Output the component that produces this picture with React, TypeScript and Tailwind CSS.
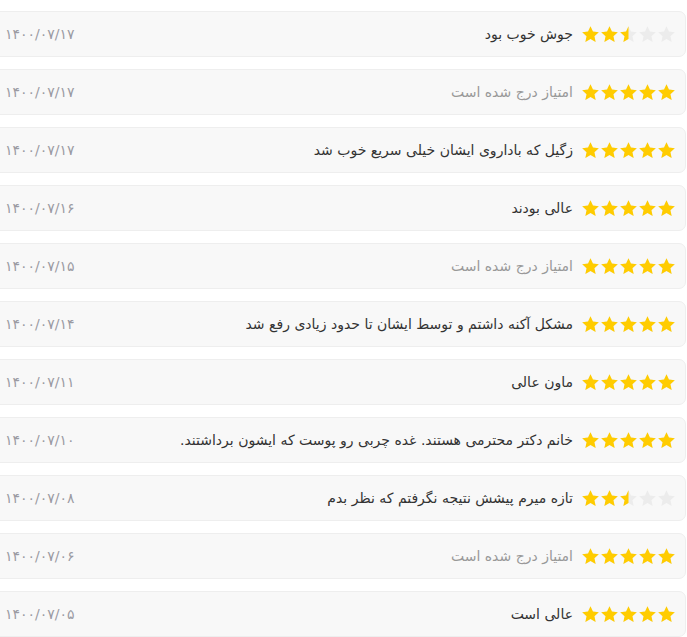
import React from "react";

type Row = { text: string; rating: number; date: string; muted?: boolean };

const rows: Row[] = [
  { text: "جوش خوب بود", rating: 2.5, date: "۱۴۰۰/۰۷/۱۷" },
  { text: "امتیاز درج شده است", rating: 5, date: "۱۴۰۰/۰۷/۱۷", muted: true },
  { text: "زگیل که باداروی ایشان خیلی سریع خوب شد", rating: 5, date: "۱۴۰۰/۰۷/۱۷" },
  { text: "عالی بودند", rating: 5, date: "۱۴۰۰/۰۷/۱۶" },
  { text: "امتیاز درج شده است", rating: 5, date: "۱۴۰۰/۰۷/۱۵", muted: true },
  { text: "مشکل آکنه داشتم و توسط ایشان تا حدود زیادی رفع شد", rating: 5, date: "۱۴۰۰/۰۷/۱۴" },
  { text: "ماون عالی", rating: 5, date: "۱۴۰۰/۰۷/۱۱" },
  { text: "خانم دکتر محترمی هستند. غده چربی رو پوست که ایشون برداشتند.", rating: 5, date: "۱۴۰۰/۰۷/۱۰" },
  { text: "تازه میرم پیشش نتیجه نگرفتم که نظر بدم", rating: 2.5, date: "۱۴۰۰/۰۷/۰۸" },
  { text: "امتیاز درج شده است", rating: 5, date: "۱۴۰۰/۰۷/۰۶", muted: true },
  { text: "عالی است", rating: 5, date: "۱۴۰۰/۰۷/۰۵" },
];

const STAR = "M12 1.5l3.09 6.76 7.41.82-5.52 5.02 1.53 7.3L12 17.77 5.49 21.4l1.53-7.3L1.5 9.08l7.41-.82z";

function Star({ fill, id }: { fill: number; id: string }) {
  return (
    <svg width="19" height="19" viewBox="0 0 24 24" className="block">
      <defs>
        <clipPath id={id}>
          <rect x="0" y="0" width={24 * fill} height="24" />
        </clipPath>
      </defs>
      <path d={STAR} fill="#ececec" />
      {fill > 0 && <path d={STAR} fill="#ffcc00" clipPath={`url(#${id})`} />}
    </svg>
  );
}

function Stars({ rating, idx }: { rating: number; idx: number }) {
  return (
    <div dir="ltr" className="flex items-center">
      {[0, 1, 2, 3, 4].map((i) => {
        const f = Math.max(0, Math.min(1, rating - i));
        return <Star key={i} fill={f} id={`s-${idx}-${i}`} />;
      })}
    </div>
  );
}

export default function App() {
  return (
    <div
      dir="rtl"
      className="w-[687px] h-[637px] overflow-hidden bg-white"
      style={{ fontFamily: '"DejaVu Sans", "Noto Sans", sans-serif' }}
    >
      <div className="ml-[-12px] mr-[1px] pt-[11px] flex flex-col gap-[12px]">
        {rows.map((r, i) => (
          <div
            key={i}
            className="h-[46px] flex items-center justify-between rounded-[7px] border border-[#eeeeee] bg-[#f8f8f8] pr-[9px] pl-[16px]"
          >
            <div className="flex items-center gap-[8px]">
              <Stars rating={r.rating} idx={i} />
              <span className={`text-[14px] ${r.muted ? "text-[#999999]" : "text-[#333333]"}`}>{r.text}</span>
            </div>
            <span className="text-[14px] text-[#9b9ba3]">{r.date}</span>
          </div>
        ))}
      </div>
    </div>
  );
}
